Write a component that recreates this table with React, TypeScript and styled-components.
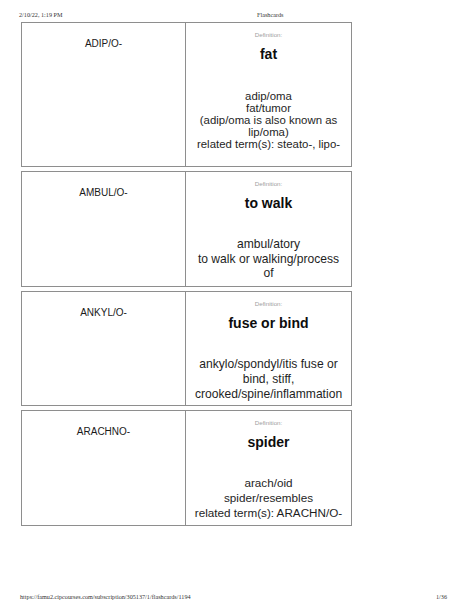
import React from "react";
import styled, { createGlobalStyle } from "styled-components";

const GlobalStyle = createGlobalStyle`
  html, body {
    margin: 0;
    padding: 0;
    background: #ffffff;
  }
  body {
    font-family: "Liberation Sans", Arial, sans-serif;
    color: #111;
  }
`;

const Page = styled.div`
  width: 474px;
  height: 613px;
  display: flex;
  flex-direction: column;
  background: #fff;
  overflow: hidden;
`;

const PrintHeader = styled.header`
  display: flex;
  align-items: center;
  height: 8px;
  margin-top: 11px;
  padding-left: 19px;
  font-family: "Liberation Serif", "Times New Roman", serif;
  font-size: 6.2px;
  line-height: 8px;
  color: #333;
`;

const HeaderDate = styled.span`
  width: 238px;
`;

const HeaderTitle = styled.span``;

const CardList = styled.main`
  display: flex;
  flex-direction: column;
  gap: 4px;
  margin-top: 3px;
  margin-left: 21px;
  width: 331px;
`;

const Card = styled.section<{ $height: number }>`
  display: grid;
  grid-template-columns: 164px 1fr;
  height: ${(p) => p.$height}px;
  box-sizing: border-box;
  border: 1px solid #8e8e8e;
`;

const TermCell = styled.div`
  border-right: 1px solid #8e8e8e;
  padding-top: 15px;
  text-align: center;
  font-size: 10px;
  line-height: 12px;
  color: #1a1a1a;
`;

const DefinitionCell = styled.div`
  display: flex;
  flex-direction: column;
  align-items: center;
  padding: 8px 6px 0;
  text-align: center;
`;

const DefLabel = styled.div`
  font-size: 6.2px;
  line-height: 8px;
  color: #a0a0a0;
`;

const Meaning = styled.div`
  margin-top: 7px;
  font-size: 14px;
  line-height: 17px;
  font-weight: 700;
  color: #0d0d0d;
`;

const Notes = styled.div<{ $size: number; $lead: number; $gap: number }>`
  margin-top: ${(p) => p.$gap}px;
  font-size: ${(p) => p.$size}px;
  line-height: ${(p) => p.$lead}px;
  color: #1e1e1e;
`;

const PrintFooter = styled.footer`
  display: flex;
  justify-content: space-between;
  align-items: center;
  margin-top: auto;
  margin-bottom: 12px;
  padding: 0 27px 0 20px;
  height: 8px;
  font-family: "Liberation Serif", "Times New Roman", serif;
  font-size: 6.2px;
  line-height: 8px;
  color: #333;
`;

type CardData = {
  term: string;
  meaning: string;
  notes: string[];
  height: number;
  size: number;
  lead: number;
  gap: number;
};

const cards: CardData[] = [
  {
    term: "ADIP/O-",
    meaning: "fat",
    notes: [
      "adip/oma",
      "fat/tumor",
      "(adip/oma is also known as lip/oma)",
      "related term(s): steato-, lipo-",
    ],
    height: 145,
    size: 11.4,
    lead: 12.1,
    gap: 27,
  },
  {
    term: "AMBUL/O-",
    meaning: "to walk",
    notes: ["ambul/atory", "to walk or walking/process of"],
    height: 116,
    size: 12.1,
    lead: 14.6,
    gap: 25,
  },
  {
    term: "ANKYL/O-",
    meaning: "fuse or bind",
    notes: ["ankylo/spondyl/itis fuse or bind, stiff, crooked/spine/inflammation"],
    height: 115,
    size: 12.1,
    lead: 14.8,
    gap: 25,
  },
  {
    term: "ARACHNO-",
    meaning: "spider",
    notes: ["arach/oid", "spider/resembles", "related term(s): ARACHN/O-"],
    height: 116,
    size: 11.7,
    lead: 15,
    gap: 24,
  },
];

export default function App() {
  return (
    <>
      <GlobalStyle />
      <Page>
        <PrintHeader>
          <HeaderDate>2/10/22, 1:19 PM</HeaderDate>
          <HeaderTitle>Flashcards</HeaderTitle>
        </PrintHeader>
        <CardList>
          {cards.map((c) => (
            <Card key={c.term} $height={c.height}>
              <TermCell>{c.term}</TermCell>
              <DefinitionCell>
                <DefLabel>Definition:</DefLabel>
                <Meaning>{c.meaning}</Meaning>
                <Notes $size={c.size} $lead={c.lead} $gap={c.gap}>
                  {c.notes.map((n) => (
                    <div key={n}>{n}</div>
                  ))}
                </Notes>
              </DefinitionCell>
            </Card>
          ))}
        </CardList>
        <PrintFooter>
          <span>https://famu2.cipcourses.com/subscription/305137/1/flashcards/1194</span>
          <span>1/36</span>
        </PrintFooter>
      </Page>
    </>
  );
}
